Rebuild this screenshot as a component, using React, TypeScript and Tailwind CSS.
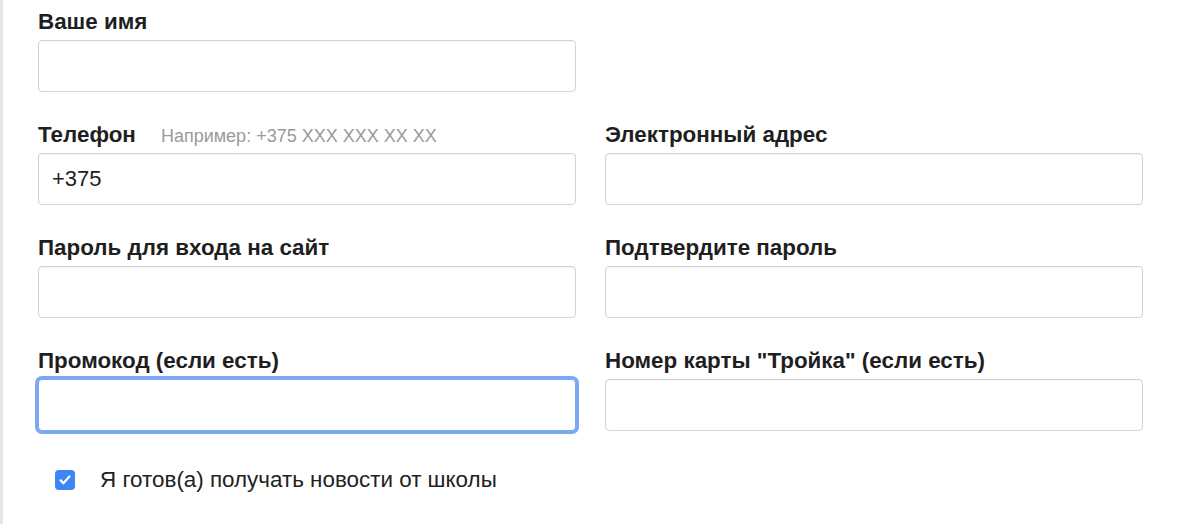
import React from 'react';

interface FieldProps {
  id: string;
  label: string;
  hint?: string;
  value?: string;
  focused?: boolean;
}

function Field({ id, label, hint, value, focused }: FieldProps) {
  return (
    <div id={`field-${id}`} className="flex flex-col">
      <div className="flex items-baseline gap-[25px] h-[24px] mb-[6px]">
        <label htmlFor={id} className="text-[22.4px] leading-[24px] font-bold text-[#1f1f1f]">
          {label}
        </label>
        {hint && <span className="text-[18px] leading-[24px] text-[#9a9a9a]">{hint}</span>}
      </div>
      <input
        id={id}
        type="text"
        defaultValue={value}
        className={`h-[52px] w-full rounded-[4px] border bg-white px-[13px] text-[22px] text-[#222] outline-none ${
          focused
            ? 'border-[#7aa8f3] ring-[3px] ring-[#7aa8f3]'
            : 'border-[#d3d3d3] shadow-[inset_0_1px_1px_rgba(0,0,0,0.04)]'
        }`}
      />
    </div>
  );
}

export default function App() {
  const fields: FieldProps[][] = [
    [{ id: 'name', label: 'Ваше имя' }],
    [
      { id: 'phone', label: 'Телефон', hint: 'Например: +375 XXX XXX XX XX', value: '+375' },
      { id: 'email', label: 'Электронный адрес' },
    ],
    [
      { id: 'password', label: 'Пароль для входа на сайт' },
      { id: 'password-confirm', label: 'Подтвердите пароль' },
    ],
    [
      { id: 'promo', label: 'Промокод (если есть)', focused: true },
      { id: 'troika', label: 'Номер карты "Тройка" (если есть)' },
    ],
  ];

  return (
    <div
      id="signup-form"
      className="min-h-[524px] w-[1200px] border-l-[3px] border-[#e6e6e6] bg-white pl-[35px] pt-[10px]"
      style={{ fontFamily: '"Liberation Sans", Arial, sans-serif' }}
    >
      <div className="grid w-[1105px] grid-cols-[538px_538px] gap-x-[29px] gap-y-[31px]">
        {fields.map((row, i) =>
          row.length === 1 ? (
            <React.Fragment key={i}>
              <Field {...row[0]} />
              <div />
            </React.Fragment>
          ) : (
            row.map((f) => <Field key={f.id} {...f} />)
          )
        )}
      </div>

      {/* News subscription */}
      <label id="news-optin" className="mt-[37px] ml-[17px] flex items-center gap-[25px]">
        <span className="flex h-[20px] w-[20px] items-center justify-center rounded-[4px] bg-[#3d86f6]">
          <svg viewBox="0 0 20 20" className="h-[16px] w-[16px]" fill="none">
            <path d="M4.5 10.5l3.5 3.5 7.5-8.5" stroke="white" strokeWidth="2.8" strokeLinecap="round" strokeLinejoin="round" />
          </svg>
        </span>
        <span className="text-[22.4px] leading-[24px] text-[#222]">Я готов(а) получать новости от школы</span>
      </label>
    </div>
  );
}
